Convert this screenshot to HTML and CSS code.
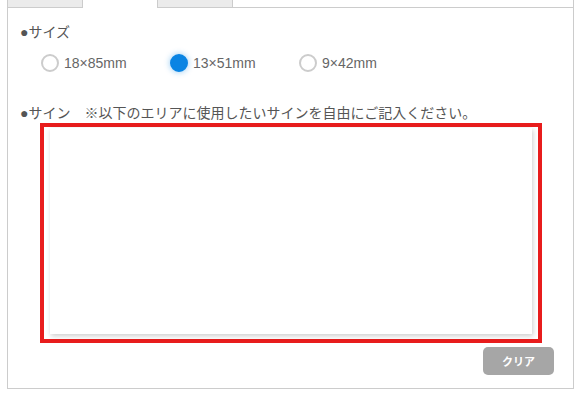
FILE: index.html
```html
<!DOCTYPE html>
<html lang="ja">
<head>
  <meta charset="UTF-8">
  <meta name="viewport" content="width=device-width, initial-scale=1.0">
  <title>サイン入力</title>
  <link rel="stylesheet" href="styles.css">
</head>
<body>
  <div class="wrap">
    <div class="tabs">
      <div class="tab tab-first"></div>
      <div class="tab tab-active"></div>
      <div class="tab"></div>
      <div class="tab-fill"></div>
    </div>
    <div class="panel">
      <p class="title">●サイズ</p>
      <div class="radios">
        <label class="radio"><span class="dot"></span>18×85mm</label>
        <label class="radio"><span class="dot checked"></span>13×51mm</label>
        <label class="radio"><span class="dot"></span>9×42mm</label>
      </div>
      <p class="title sign-title">●サイン　※以下のエリアに使用したいサインを自由にご記入ください。</p>
      <div class="sign-frame">
        <div class="sign-canvas"></div>
      </div>
      <div class="actions">
        <button type="button" class="clear-btn">クリア</button>
      </div>
    </div>
  </div>
</body>
</html>
```

FILE: styles.css
```css
body {
  margin: 0;
  background: #fff;
  font-family: "Liberation Sans", "Noto Sans CJK JP", sans-serif;
  color: #555;
}
.wrap {
  margin-left: 7px;
  width: 567px;
}
.tabs {
  display: flex;
  height: 8px;
}
.tab {
  width: 74px;
  height: 7px;
  background: #ebebeb;
  border: 1px solid #ccc;
  border-top: none;
}
.tab-active {
  background: #fff;
  border: none;
}
.tab-fill {
  flex: 1;
  border-bottom: 1px solid #ccc;
  border-right: 1px solid #ccc;
}
.panel {
  box-sizing: border-box;
  height: 381px;
  border: 1px solid #ccc;
  border-top: none;
  padding: 14px 19px 0 12px;
}
.title {
  margin: 0;
  font-size: 14px;
  line-height: 20px;
  color: #555;
}
.radios {
  display: flex;
  margin: 11px 0 0 21px;
}
.radio {
  width: 129px;
  display: flex;
  align-items: center;
  gap: 5px;
  font-size: 14px;
  line-height: 20px;
  color: #666;
}
.dot {
  width: 14px;
  height: 14px;
  border: 2px solid #ccc;
  border-radius: 50%;
}
.dot.checked {
  border-color: #0a84e3;
  background: #0a84e3;
  box-shadow: 0 0 6px rgba(10, 132, 227, 0.45);
}
.sign-title {
  margin-top: 30px;
}
.sign-frame {
  margin-left: 20px;
  width: 482px;
  height: 206px;
  border: 4px solid #e81c1c;
  padding: 1px 6px 5px 6px;
  display: flex;
}
.sign-canvas {
  flex: 1;
  background: #fff;
  box-shadow: 1px 2px 5px rgba(0, 0, 0, 0.2);
}
.actions {
  display: flex;
  justify-content: flex-end;
  margin-top: 4px;
}
.clear-btn {
  width: 71px;
  height: 28px;
  border: none;
  border-radius: 5px;
  background: #a6a6a6;
  color: #fff;
  font-family: "Noto Sans CJK JP", sans-serif;
  font-size: 11px;
  font-weight: bold;
  cursor: pointer;
}
```
